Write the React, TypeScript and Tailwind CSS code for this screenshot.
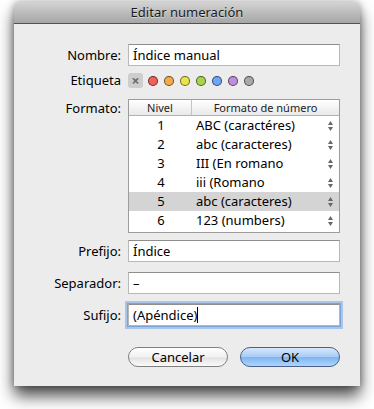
import React from "react";

function Field({ value, focused, caret }: { value: string; focused?: boolean; caret?: boolean }) {
  return (
    <div
      className={`h-[22px] w-[212px] bg-white border border-[#b8b8b8] border-t-[#8e8e8e] flex items-center pl-[4px] text-[13px] text-black ${
        focused ? "shadow-[0_0_0_1px_#7aa3d6,0_0_0_3px_#a9c6ea]" : ""
      }`}
    >
      <span>{value}</span>
      {caret && <span className="inline-block w-px h-[16px] bg-black" />}
    </div>
  );
}

function Stepper() {
  return (
    <svg width="7" height="12" viewBox="0 0 7 12" className="block">
      <path d="M3.5 1 L6 5 L1 5 Z" fill="#666" />
      <path d="M1 7 L6 7 L3.5 11 Z" fill="#666" />
    </svg>
  );
}

const rows = [
  ["1", "ABC (caractéres)"],
  ["2", "abc (caracteres)"],
  ["3", "III (En romano"],
  ["4", "iii (Romano"],
  ["5", "abc (caracteres)"],
  ["6", "123 (numbers)"],
];

const dots = ["#f0615c", "#f6a94b", "#ebe34c", "#a7d54d", "#6ca6f5", "#c08ed8", "#a9a9a9"];

export default function App() {
  return (
    <div className="w-[374px] h-[409px] bg-white pt-[2px] pl-[14px] font-['Noto_Sans',sans-serif] text-[13px] text-black leading-none">
      <div className="w-[346px] h-[384px] bg-[#ececec] rounded-t-[5px] shadow-[0_10px_16px_rgba(0,0,0,0.7),0_0_7px_rgba(0,0,0,0.3)] flex flex-col">
        <div className="h-[21px] rounded-t-[5px] bg-[linear-gradient(#d3d3d3,#a6a6a6)] flex items-center justify-center text-[13px] text-[#1a1a1a] [text-shadow:0_1px_0_rgba(255,255,255,0.5)]">
          Editar numeración
        </div>
        <div className="h-px bg-[#515151]" />

        <div className="flex flex-col pt-[20px]">
          <div className="flex items-center h-[22px]">
            <div className="w-[107px] text-right">Nombre:</div>
            <div className="ml-[7px]">
              <Field value="Índice manual" />
            </div>
          </div>

          <div className="flex items-center h-[15px] mt-[7px]">
            <div className="w-[107px] text-right">Etiqueta</div>
            <div className="ml-[7px] flex items-center">
              <div className="w-[15px] h-[15px] rounded-[3px] bg-[#cdcdcd] flex items-center justify-center text-[#6b6b6b] text-[14px] font-bold">
                ×
              </div>
              <div className="flex items-center gap-[6px] ml-[5px]">
                {dots.map((c) => (
                  <div
                    key={c}
                    className="w-[10px] h-[10px] rounded-full border border-[rgba(0,0,0,0.55)]"
                    style={{ backgroundColor: c }}
                  />
                ))}
              </div>
            </div>
          </div>

          <div className="flex items-start mt-[11px]">
            <div className="w-[107px] text-right pt-[3px]">Formato:</div>
            <div className="ml-[7px] w-[212px] h-[134px] border border-[#9c9c9c] bg-white flex flex-col">
              <div className="h-[16px] flex items-stretch bg-[linear-gradient(#ffffff,#e9e9e9)] border-b border-[#b2b2b2] text-[11px] text-[#222]">
                <div className="w-[63px] border-r border-[#c4c4c4] flex items-center justify-center">Nivel</div>
                <div className="flex-1 flex items-center justify-center">Formato de número</div>
              </div>
              {rows.map(([n, f], i) => (
                <div
                  key={n}
                  className={`h-[19px] flex items-center ${i === 4 ? "bg-[#d4d4d4]" : ""}`}
                >
                  <div className="w-[64px] text-center">{n}</div>
                  <div className="flex-1 pl-[3px]">{f}</div>
                  <div className="w-[18px] flex justify-center">
                    <Stepper />
                  </div>
                </div>
              ))}
            </div>
          </div>

          <div className="flex items-center h-[22px] mt-[7px]">
            <div className="w-[107px] text-right">Prefijo:</div>
            <div className="ml-[7px]">
              <Field value="Índice" />
            </div>
          </div>

          <div className="flex items-center h-[22px] mt-[10px]">
            <div className="w-[107px] text-right">Separador:</div>
            <div className="ml-[7px]">
              <Field value="–" />
            </div>
          </div>

          <div className="flex items-center h-[22px] mt-[10px]">
            <div className="w-[107px] text-right">Sufijo:</div>
            <div className="ml-[7px]">
              <Field value="(Apéndice)" focused caret />
            </div>
          </div>

          <div className="flex mt-[21px] ml-[114px] gap-[12px]">
            <div className="w-[100px] h-[20px] rounded-full border border-[#808080] bg-[linear-gradient(#ffffff,#f1f1f1_50%,#e2e2e2_55%,#fbfbfb)] flex items-center justify-center text-[13px]">
              Cancelar
            </div>
            <div className="w-[100px] h-[20px] rounded-full border border-[#4d5f88] bg-[linear-gradient(#d6e7fb,#a9cdf5_48%,#80b5f0_52%,#acd6fc)] flex items-center justify-center text-[13px]">
              OK
            </div>
          </div>
        </div>
      </div>
    </div>
  );
}
